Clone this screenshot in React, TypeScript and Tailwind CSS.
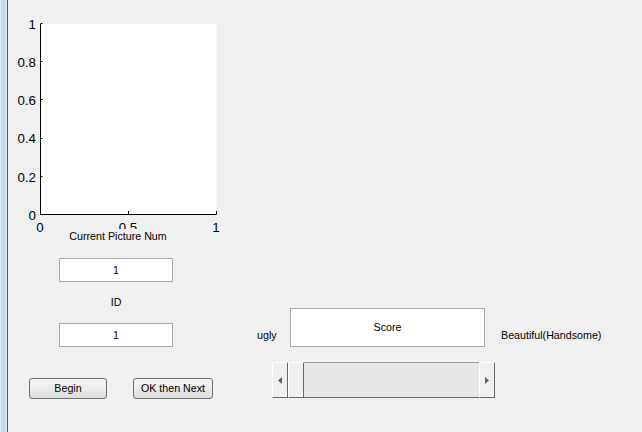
import React from 'react';

const font = { fontFamily: '"Liberation Sans", Arial, sans-serif' };

const yTicks = [
  { label: '1', y: 24 },
  { label: '0.8', y: 62.2 },
  { label: '0.6', y: 100.4 },
  { label: '0.4', y: 138.6 },
  { label: '0.2', y: 176.8 },
  { label: '0', y: 215 },
];

const xTicks = [
  { label: '0', x: 32 },
  { label: '0.5', x: 120 },
  { label: '1', x: 208 },
];

const Axes: React.FC = () => (
  <svg width={222} height={236} className="block" style={font}>
    <rect x={32.5} y={24} width={176} height={190.5} fill="#ffffff" />
    <line x1={32.5} y1={24} x2={32.5} y2={215} stroke="#000" strokeWidth={1} />
    <line x1={32} y1={214.5} x2={208.5} y2={214.5} stroke="#000" strokeWidth={1} />
    {yTicks.map(t => (
      <g key={t.label}>
        <line x1={32.5} y1={Math.round(t.y) - 0.5} x2={34.5} y2={Math.round(t.y) - 0.5} stroke="#000" />
        <text x={28} y={t.y + 4.8} fontSize={13.3} textAnchor="end" fill="#000">
          {t.label}
        </text>
      </g>
    ))}
    {xTicks.map(t => (
      <g key={t.label}>
        <line x1={t.x + 0.5} y1={214.5} x2={t.x + 0.5} y2={211} stroke="#000" />
        <text x={t.x} y={231.5} fontSize={13.3} textAnchor="middle" fill="#000">
          {t.label}
        </text>
      </g>
    ))}
  </svg>
);

const EditBox: React.FC<{ value: string }> = ({ value }) => (
  <div className="ml-[51px] w-[114px] h-[24px] bg-white border border-[#ababab] flex items-center justify-center text-[10.7px] text-black">
    {value}
  </div>
);

const PushButton: React.FC<{ label: string; width: string }> = ({ label, width }) => (
  <button
    className={`${width} h-[21px] rounded-[3px] border border-[#707070] bg-gradient-to-b from-[#f3f3f3] via-[#ebebeb] to-[#dcdcdc] text-[10.7px] text-black leading-none flex items-center justify-center`}
    style={font}
  >
    {label}
  </button>
);

const ArrowButton: React.FC<{ dir: 'left' | 'right' }> = ({ dir }) => (
  <div className="w-[16px] h-full bg-[#f0f0f0] border-l border-t border-white border-r border-r-[#696969] border-b border-b-[#696969] flex items-center justify-center">
    <svg width={4} height={7} viewBox="0 0 4 7">
      {dir === 'left' ? (
        <polygon points="4,0 4,7 0,3.5" fill="#606060" />
      ) : (
        <polygon points="0,0 0,7 4,3.5" fill="#606060" />
      )}
    </svg>
  </div>
);

const Slider: React.FC = () => (
  <div className="ml-[15px] mt-[15px] w-[223px] h-[36px] flex">
    <ArrowButton dir="left" />
    <div className="w-[16px] h-full bg-[#f0f0f0] border-l border-t border-white border-r border-r-[#696969] border-b border-b-[#696969]" />
    <div className="flex-1 h-full bg-[#e6e6e6] border-t border-t-[#a0a0a0] border-b border-b-[#696969]" />
    <ArrowButton dir="right" />
  </div>
);

export default function App() {
  return (
    <div className="w-[642px] h-[432px] bg-[#f0f0f0] flex overflow-hidden text-black" style={font}>
      <div className="flex h-full">
        <div className="w-px bg-[#e3ecf5]" />
        <div className="w-[5px] bg-[#c6dbf0]" />
        <div className="w-px bg-[#deeaf7]" />
        <div className="w-px bg-[#4f5b67]" />
      </div>

      <div className="w-[222px] flex flex-col">
        <Axes />
        <div className="relative -mt-[7px] ml-[36px] w-[148px] h-[14px] bg-[#f0f0f0] text-center text-[10.7px] leading-[14px]">
          Current Picture Num
        </div>
        <div className="mt-[15px]">
          <EditBox value="1" />
        </div>
        <div className="mt-[13px] ml-[51px] w-[114px] h-[14px] text-center text-[10.7px] leading-[14px]">ID</div>
        <div className="mt-[14px]">
          <EditBox value="1" />
        </div>
        <div className="mt-[31px] ml-[21px] flex gap-[26px]">
          <PushButton label="Begin" width="w-[78px]" />
          <PushButton label="OK then Next" width="w-[80px]" />
        </div>
      </div>

      <div className="ml-[27px] mt-[308px] flex flex-col">
        <div className="flex items-start">
          <div className="w-[33px] mt-[20px] text-[10.7px] leading-[14px]">ugly</div>
          <div className="w-[195px] h-[39px] bg-white border border-[#ababab] flex items-center justify-center text-[10.7px]">
            Score
          </div>
          <div className="ml-[16px] mt-[20px] text-[10.7px] leading-[14px] whitespace-nowrap">Beautiful(Handsome)</div>
        </div>
        <Slider />
      </div>
    </div>
  );
}
